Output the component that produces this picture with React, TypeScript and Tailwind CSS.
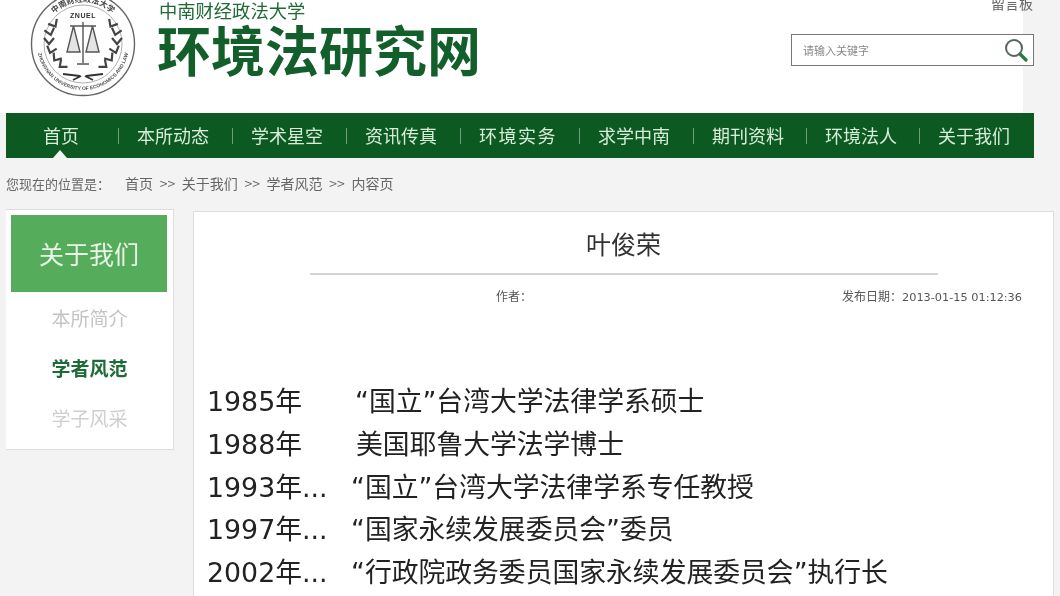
const cjk = { fontFamily: '"Noto Sans CJK SC", "Liberation Sans", sans-serif' };
const bodyFont = { fontFamily: '"DejaVu Sans", "Noto Sans CJK SC", sans-serif' };

const navItems = [
  { label: '本所动态', className: 'w-[114px]' },
  { label: '学术星空', className: 'w-[114px]' },
  { label: '资讯传真', className: 'w-[114px]' },
  { label: '环境实务', className: 'w-[119px] tracking-[1.5px]' },
  { label: '求学中南', className: 'w-[114px]' },
  { label: '期刊资料', className: 'w-[113px]' },
  { label: '环境法人', className: 'w-[113px]' },
  { label: '关于我们', className: 'w-[113px]' },
];

const history = [
  { year: '1985年', gap: 'w-[148px]', text: '“国立”台湾大学法律学系硕士' },
  { year: '1988年', gap: 'w-[149px]', text: '美国耶鲁大学法学博士' },
  { year: '1993年...', gap: 'w-[144px]', text: '“国立”台湾大学法律学系专任教授' },
  { year: '1997年...', gap: 'w-[144px]', text: '“国家永续发展委员会”委员' },
  { year: '2002年...', gap: 'w-[144px]', text: '“行政院政务委员国家永续发展委员会”执行长' },
];

function Laurel({ flip }: { flip?: boolean }) {
  const leaves = [
    [-21, 21, 50],
    [-27, 14, 35],
    [-32, 6, 18],
    [-34, -3, 0],
    [-33, -12, -15],
    [-29, -20, -30],
  ];
  return (
    <g transform={flip ? 'scale(-1,1)' : undefined}>
      {leaves.map(([x, y, r], i) => (
        <g key={i} transform={`translate(${x} ${y}) rotate(${r})`}>
          <path d="M-5 -3 L0 3 L5 -3" fill="none" stroke="#444" strokeWidth="2.2" />
        </g>
      ))}
    </g>
  );
}

function Logo() {
  return (
    <svg width="110" height="100" viewBox="-55 -44 110 100" className="absolute left-[28px] top-0">
      <defs>
        <path id="ringTop" d="M-42 0 A42 42 0 0 1 42 0" />
        <path id="ringBottom" d="M-46 0 A46 46 0 0 0 46 0" />
      </defs>
      <circle cx="0" cy="0" r="51.5" fill="#fff" stroke="#666" strokeWidth="1.4" />
      <circle cx="0" cy="0" r="39" fill="none" stroke="#999" strokeWidth="0.8" />
      <text fontSize="8" fill="#444" fontWeight="700" style={cjk}>
        <textPath href="#ringTop" startOffset="50%" textAnchor="middle">中南财经政法大学</textPath>
      </text>
      <text fontSize="5" fill="#555" fontWeight="700" style={{ fontFamily: '"Liberation Sans", sans-serif' }}>
        <textPath href="#ringBottom" startOffset="50%" textAnchor="middle">ZHONGNAN UNIVERSITY OF ECONOMICS AND LAW</textPath>
      </text>
      <text x="0" y="-26.5" fontSize="7" fontWeight="700" fill="#333" textAnchor="middle" letterSpacing="0.5" style={{ fontFamily: '"Liberation Sans", sans-serif' }}>ZNUEL</text>
      <Laurel />
      <Laurel flip />
      <path d="M0 -22 V19 M-6 20 H6 M-13 -18 H13 M-9.5 -18 L-16 8 H-3 Z M9.5 -18 L3 8 H16 Z" fill="#e4e4e4" stroke="#555" strokeWidth="1.4" />
      <path d="M-20 30 L-3 32 M20 30 L3 32 M-10 36 L-2 32 M10 36 L2 32" fill="none" stroke="#333" strokeWidth="1.8" />
    </svg>
  );
}

function SearchIcon() {
  return (
    <svg width="26" height="26" viewBox="0 0 26 26" fill="none">
      <circle cx="11" cy="11" r="8" stroke="#55675c" strokeWidth="2" />
      <path d="M17 17 L23 23" stroke="#2f7a4b" strokeWidth="3.4" strokeLinecap="round" />
    </svg>
  );
}

export default function App() {
  return (
    <div className="relative w-[1060px] h-[596px] overflow-hidden bg-[#f3f3f3] blur-[0.5px]" style={cjk}>
      {/* Header */}
      <header className="relative h-[113px] bg-[linear-gradient(to_right,#fff_1023px,#f3f3f3_1023px)]">
        <Logo />
        <div className="flex flex-col pl-[157px]">
          <p className="h-[21px] pl-[2px] text-[18.3px] leading-[20px] text-[#1f6b37]">中南财经政法大学</p>
          <h1 className="text-[54px] leading-[56px] font-bold text-[#135f2b]">环境法研究网</h1>
        </div>
        <span className="absolute right-[27px] -top-[7px] text-[14px] leading-[20px] text-[#666]">留言板</span>
        <div className="absolute left-[791px] top-[34px] flex h-[32px] w-[243px] items-center justify-between border border-[#777] bg-white pl-[11px] pr-[4px]">
          <span className="text-[11px] text-[#888]">请输入关键字</span>
          <SearchIcon />
        </div>
      </header>

      {/* Nav */}
      <nav className="relative ml-[6px] flex h-[45px] w-[1028px] items-center bg-[#0c5a22] text-[18px] text-[#d9ecd9]">
        <span className="w-[112px] pl-[37px]">首页</span>
        {navItems.map((item) => (
          <div key={item.label} className={`flex items-center ${item.className}`}>
            <span className="h-[16px] w-px bg-[#6f9f7c]" />
            <span className="pl-[18px]">{item.label}</span>
          </div>
        ))}
        <span className="absolute left-[47px] bottom-0 h-0 w-0 border-x-[7px] border-b-[8px] border-x-transparent border-b-[#f3f3f3]" />
      </nav>

      {/* Breadcrumb */}
      <div className="flex h-[51px] items-center pl-[6px] text-[#666]">
        <span className="w-[119px] text-[13px]">您现在的位置是：</span>
        <span className="text-[14px] [word-spacing:3.5px]">首页 &gt;&gt; 关于我们 &gt;&gt; 学者风范 &gt;&gt; 内容页</span>
      </div>

      <div className="flex items-start pl-[6px]">
        {/* Sidebar */}
        <aside className="h-[241px] w-[168px] border-y border-r border-[#ddd] bg-white pl-[5px] pt-[5px]">
          <div className="flex h-[77px] w-[156px] items-center justify-center bg-[#55ad5b] text-[25px] text-[#e8f5e8]">关于我们</div>
          <ul className="w-[157px] text-center text-[19px]">
            <li className="mt-[13px] h-[26px] leading-[26px] text-[#c4c4c4]">本所简介</li>
            <li className="mt-[24px] h-[26px] leading-[26px] font-bold text-[#1d6b37]">学者风范</li>
            <li className="mt-[24px] h-[26px] leading-[26px] text-[#cfcfcf]">学子风采</li>
          </ul>
        </aside>

        {/* Article */}
        <main className="ml-[19px] mt-[2px] h-[400px] w-[861px] border border-[#ddd] bg-white">
          <h2 className="pt-[13px] text-center text-[25px] leading-[36px] text-[#333]">叶俊荣</h2>
          <div className="ml-[116px] mt-[12px] h-[2px] w-[628px] bg-[#d4d4d4]" />
          <div className="mt-[12px] flex items-baseline text-[12px] text-[#555]">
            <span className="ml-[302px] w-[346px]">作者：</span>
            <span>发布日期：</span>
            <span className="text-[11.3px]" style={bodyFont}>2013-01-15 01:12:36</span>
          </div>
          <div className="mt-[74px] pl-[13px] text-[26.8px] text-[#222]" style={bodyFont}>
            {history.map((row) => (
              <div key={row.year} className="flex h-[42.7px] items-center whitespace-nowrap">
                <span className={row.gap}>{row.year}</span>
                <span>{row.text}</span>
              </div>
            ))}
          </div>
        </main>
      </div>
    </div>
  );
}
